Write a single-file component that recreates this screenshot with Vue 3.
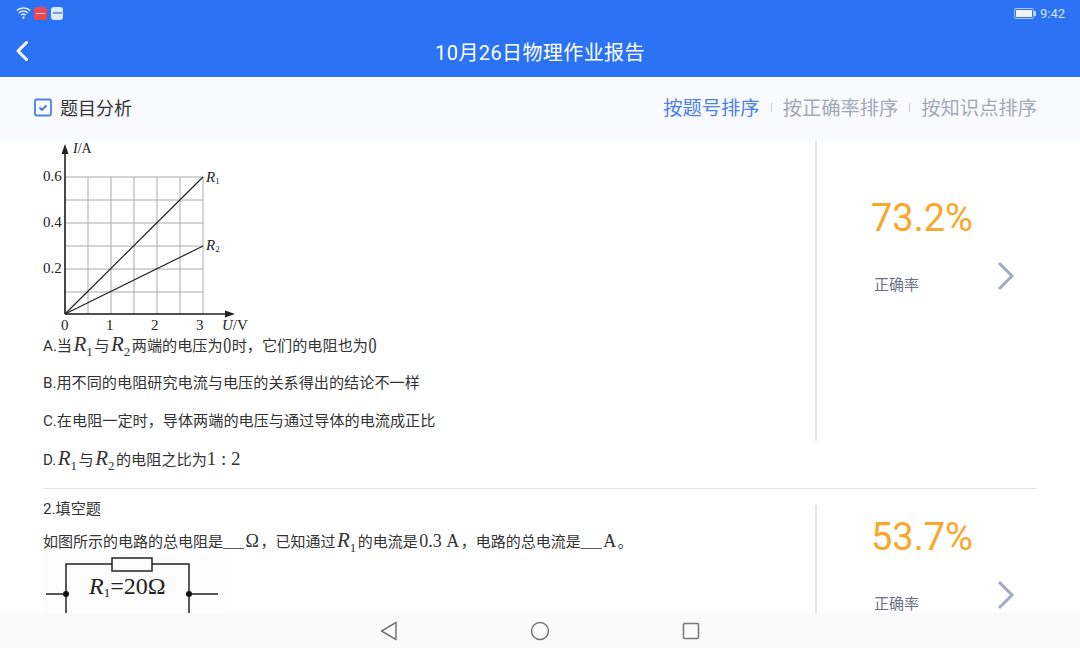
<template>
  <div class="page">
    <header class="topbar">
      <div class="status">
        <div class="status-left">
          <svg class="wifi" width="16" height="14" viewBox="0 0 16 14" fill="none" stroke="#fff" stroke-width="1.300">
            <path d="M.8 4.500c3.900-3.600 9.500-3.600 13.400 0" />
            <path d="M3 6.900c2.700-2.400 6.300-2.400 9 0" />
            <path d="M5.100 9.100c1.500-1.200 3.300-1.200 4.800 0" />
            <circle cx="7.500" cy="11.700" r="1.100" fill="#fff" stroke="none" />
          </svg>
          <span class="app-badge red"><i></i></span>
          <span class="app-badge pale"><i></i></span>
        </div>
        <div class="status-right">
          <span class="battery"><i></i></span>
          <span class="clock">9:42</span>
        </div>
      </div>
      <div class="titlebar">
        <svg class="back" width="14" height="22" viewBox="0 0 14 22" fill="none" stroke="#fff" stroke-width="3" stroke-linecap="round" stroke-linejoin="round">
          <path d="M11.500 2.500 3 11l8.500 8.500" />
        </svg>
        <h1 class="title">10月26日物理作业报告</h1>
      </div>
    </header>

    <div class="toolbar">
      <div class="tool-left">
        <svg width="18" height="19" viewBox="0 0 18 19" fill="none">
          <rect x="1" y="1.500" width="16" height="16" rx="1.500" stroke="#4a80ee" stroke-width="1.800" />
          <path d="M5.500 9.500 8 12l4.500-4.500" stroke="#3f76e6" stroke-width="1.800" />
        </svg>
        <span>题目分析</span>
      </div>
      <div class="sorts">
        <template v-for="(tab, i) in tabs" :key="tab">
          <i v-if="i > 0" class="sort-sep"></i>
          <span class="sort" :class="{ active: i === 0 }">{{ tab }}</span>
        </template>
      </div>
    </div>

    <main class="content">
      <section class="question first">
        <div class="q-body">
          <svg class="graph" width="210" height="194" viewBox="0 0 210 194">
            <g stroke="#aaa" stroke-width="1">
              <line v-for="x in gridX" :key="'x' + x" :x1="x" y1="36" :x2="x" y2="173" />
              <line v-for="y in gridY" :key="'y' + y" x1="22" :y1="y" x2="160" :y2="y" />
            </g>
            <g stroke="#222" stroke-width="1.200">
              <line x1="22" y1="173" x2="160" y2="36" />
              <line x1="22" y1="173" x2="160" y2="105" />
              <line x1="22" y1="173" x2="185" y2="173" stroke-width="1.600" />
              <line x1="22" y1="173" x2="22" y2="10" stroke-width="1.600" />
            </g>
            <path d="M22 3 25.500 13h-7zM192 173l-10 3.500v-7z" fill="#222" />
            <g class="g-text">
              <text x="0" y="40">0.6</text>
              <text x="0" y="86">0.4</text>
              <text x="0" y="132">0.2</text>
              <text x="18" y="189">0</text>
              <text x="63" y="189">1</text>
              <text x="108" y="189">2</text>
              <text x="153" y="189">3</text>
              <text x="30" y="12" font-size="14"><tspan font-style="italic">I</tspan>/A</text>
              <text x="179" y="189"><tspan font-style="italic">U</tspan>/V</text>
              <text x="163" y="41" font-style="italic">R<tspan font-size="9" dy="2" font-style="normal">1</tspan></text>
              <text x="163" y="109" font-style="italic">R<tspan font-size="9" dy="2" font-style="normal">2</tspan></text>
            </g>
          </svg>
          <p class="line">A.当<span class="m"><em>R</em><sub>1</sub></span>与<span class="m"><em>R</em><sub>2</sub></span>两端的电压为<span class="zero">0</span>时，它们的电阻也为<span class="zero">0</span></p>
          <p class="line plain">B.用不同的电阻研究电流与电压的关系得出的结论不一样</p>
          <p class="line plain">C.在电阻一定时，导体两端的电压与通过导体的电流成正比</p>
          <p class="line">D.<span class="m"><em>R</em><sub>1</sub></span>与<span class="m"><em>R</em><sub>2</sub></span>的电阻之比为<span class="m ratio">1 : 2</span></p>
        </div>
        <aside class="stat tall">
          <div class="rate">73.2%</div>
          <div class="stat-foot">
            <span class="rate-label">正确率</span>
            <svg width="18" height="30" viewBox="0 0 18 30" fill="none" stroke="#a3aabd" stroke-width="3">
              <path d="M2 2l13 13L2 28" />
            </svg>
          </div>
        </aside>
      </section>

      <section class="question second">
        <div class="q-body">
          <p class="q-type plain">2.填空题</p>
          <p class="line stem">如图所示的电路的总电阻是<span class="blank">___</span><span class="m">Ω</span>，已知通过<span class="m"><em>R</em><sub>1</sub></span>的电流是<span class="m">0.3 A</span>，电路的总电流是<span class="blank">___</span><span class="m">A</span>。</p>
          <svg class="circuit" width="182" height="70" viewBox="0 0 182 70" fill="none">
            <rect width="182" height="70" fill="#fcfcfc" />
            <g stroke="#222" stroke-width="1.500">
              <path d="M3 41h20M23 70V11h46M109 11h37v59M146 41h29" />
              <rect x="69" y="5" width="40" height="13" />
            </g>
            <circle cx="23" cy="41" r="3" fill="#111" />
            <circle cx="146" cy="41" r="3" fill="#111" />
            <text class="c-text" x="46" y="41"><tspan font-style="italic">R</tspan><tspan font-size="13" dy="3">1</tspan><tspan dy="-3">=20Ω</tspan></text>
          </svg>
        </div>
        <aside class="stat">
          <div class="rate">53.7%</div>
          <div class="stat-foot">
            <span class="rate-label">正确率</span>
            <svg width="18" height="30" viewBox="0 0 18 30" fill="none" stroke="#a3aabd" stroke-width="3">
              <path d="M2 2l13 13L2 28" />
            </svg>
          </div>
        </aside>
      </section>
    </main>

    <footer class="navbar">
      <svg width="18" height="20" viewBox="0 0 18 20" fill="none" stroke="#777" stroke-width="1.500" stroke-linejoin="round">
        <path d="M16 1.500v17L1.500 10z" />
      </svg>
      <svg width="20" height="20" viewBox="0 0 20 20" fill="none" stroke="#777" stroke-width="1.500">
        <circle cx="10" cy="10" r="8.500" />
      </svg>
      <svg width="18" height="18" viewBox="0 0 18 18" fill="none" stroke="#777" stroke-width="1.500">
        <rect x="1.500" y="1.500" width="15" height="15" rx="1" />
      </svg>
    </footer>
  </div>
</template>

<script setup>
const tabs = ["按题号排序", "按正确率排序", "按知识点排序"];
const gridX = [22, 45, 68, 91, 114, 137, 160];
const gridY = [36, 59, 82, 105, 128, 151, 173];
</script>

<style scoped>
.page {
  width: 1080px;
  height: 648px;
  display: flex;
  flex-direction: column;
  overflow: hidden;
  background: #fff;
  color: #333;
  font-family: Roboto, "Noto Sans CJK SC", sans-serif;
}

.topbar {
  height: 77px;
  flex: none;
  background: #2b72f5;
  color: #fff;
}

.status {
  height: 26px;
  padding: 0 15px 0 16px;
  display: flex;
  align-items: center;
  justify-content: space-between;
}

.status-left {
  display: flex;
  align-items: center;
  gap: 2px;
}

.app-badge {
  width: 13px;
  height: 13px;
  border-radius: 3px;
  display: flex;
  align-items: center;
  justify-content: center;
}

.app-badge i {
  width: 9px;
  height: 1px;
  background: #ffd5d5;
}

.app-badge.red {
  background: #ee4653;
}

.app-badge.pale {
  margin-left: 2px;
  width: 12px;
  background: #dce8fd;
}

.app-badge.pale i {
  background: #7d98cf;
  height: 2px;
}

.status-right {
  display: flex;
  align-items: center;
  gap: 4px;
}

.battery {
  width: 20px;
  height: 11px;
  border: 1px solid #a9c6fb;
  border-radius: 2px;
  padding: 1px;
  box-sizing: border-box;
  position: relative;
  margin-right: 2px;
}

.battery::after {
  content: "";
  position: absolute;
  right: -3px;
  top: 2px;
  width: 2px;
  height: 5px;
  background: #c4d8fc;
}

.battery i {
  display: block;
  height: 100%;
  width: 100%;
  background: #eef3ff;
}

.clock {
  font-size: 13px;
  color: #d6e4ff;
}

.titlebar {
  height: 51px;
  display: flex;
  align-items: center;
  justify-content: center;
  position: relative;
}

.back {
  position: absolute;
  left: 15px;
  top: 14px;
}

.title {
  margin: 0;
  font-size: 20px;
  font-weight: 400;
  letter-spacing: 0.4px;
}

.toolbar {
  height: 64px;
  flex: none;
  box-sizing: border-box;
  background: #f8faff;
  padding: 0 43px 5px 34px;
  display: flex;
  align-items: center;
  justify-content: space-between;
}

.tool-left {
  display: flex;
  align-items: center;
  gap: 8px;
  font-size: 18px;
}

.tool-left svg {
  margin-top: 2px;
}

.sorts {
  display: flex;
  align-items: center;
  gap: 10px;
}

.sort {
  font-size: 19.300px;
  color: #a2a8b8;
}

.sort.active {
  color: #4a80ee;
}

.sort-sep {
  width: 1px;
  height: 9px;
  margin: 2px 1px 0;
  background: #c9ced9;
}

.content {
  flex: 1;
  min-height: 0;
  overflow: hidden;
  padding: 0 43px;
}

.question {
  display: flex;
  align-items: flex-start;
  justify-content: space-between;
}

.question.first {
  border-bottom: 1px solid #e2e4e8;
  height: 347px;
}

.question.second {
  padding-top: 10px;
}

.q-body {
  width: 760px;
}

.graph {
  display: block;
}

.g-text {
  font-family: "Liberation Serif", serif;
  font-size: 15px;
  fill: #222;
}

.line,
.q-type {
  margin: 0 0 18px;
  height: 20px;
  font-size: 15.150px;
  line-height: 19px;
  white-space: nowrap;
}

.line.plain,
.q-type.plain {
  line-height: 21px;
}

.q-type {
  margin-bottom: 12px;
}

.stem {
  margin-bottom: 2px;
  font-size: 15px;
}

.m {
  font-family: "Liberation Serif", serif;
  font-size: 18px;
  margin: 0 1.500px;
}

.m em {
  font-size: 21px;
}

.m sub {
  font-size: 13px;
  line-height: 0;
}

.ratio {
  margin: 0;
  font-size: 19px;
}

.zero {
  display: inline-block;
  width: 9px;
  text-align: center;
  font-family: "Liberation Serif", serif;
  font-size: 16px;
  line-height: 19px;
  vertical-align: top;
  transform: scaleY(1.500);
}

.blank {
  font-family: "Liberation Serif", serif;
  font-size: 14px;
}

.circuit {
  display: block;
}

.c-text {
  font-family: "Liberation Serif", serif;
  font-size: 24px;
  fill: #222;
}

.stat {
  width: 222px;
  box-sizing: border-box;
  border-left: 2px solid #dfe3ea;
  padding: 10px 22px 0 54px;
  margin-top: 6px;
  height: 160px;
  flex: none;
}

.stat.tall {
  margin-top: 0;
  padding-top: 55px;
  height: 300px;
}

.rate {
  font-size: 38px;
  line-height: 44px;
  color: #f9a72b;
  white-space: nowrap;
}

.stat-foot {
  margin-top: 21px;
  display: flex;
  justify-content: space-between;
  align-items: flex-start;
}

.rate-label {
  font-size: 15px;
  line-height: 20px;
  margin: 14px 0 0 3px;
  color: #6b7185;
}

.navbar {
  height: 35px;
  flex: none;
  background: #fafafa;
  display: flex;
  align-items: center;
  justify-content: center;
  gap: 132px;
}
</style>
